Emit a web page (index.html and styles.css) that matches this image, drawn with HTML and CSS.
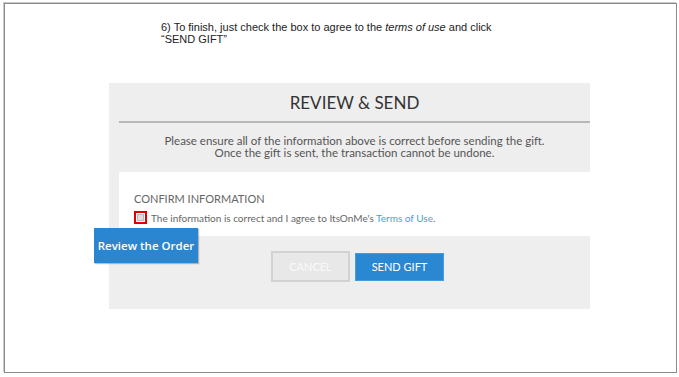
FILE: index.html
```html
<!DOCTYPE html>
<html lang="en">
<head>
    <meta charset="UTF-8">
    <meta name="viewport" content="width=device-width, initial-scale=1.0">
    <title>Send Gift - Step 6</title>
    <link rel="stylesheet" href="styles.css">
</head>
<body>
    <div class="slide">
        <p class="step-text">6) To finish, just check the box to agree to the <em>terms of use</em> and click<br>&ldquo;SEND GIFT&rdquo;</p>

        <div class="review-panel">
            <div class="review-head">
                <h2>REVIEW &amp; SEND</h2>
                <p class="note">Please ensure all of the information above is correct before sending the gift.<br>Once the gift is sent, the transaction cannot be undone.</p>
            </div>
            <div class="confirm-box">
                <h3>CONFIRM INFORMATION</h3>
                <label class="agree">
                    <span class="check"><span class="check-inner"></span></span>
                    <span>The information is correct and I agree to ItsOnMe's <a href="#">Terms of Use</a>.</span>
                </label>
            </div>
            <div class="actions">
                <button class="btn-cancel">CANCEL</button>
                <button class="btn-send">SEND GIFT</button>
            </div>
        </div>

        <div class="callout">Review the Order</div>
    </div>
</body>
</html>
```

FILE: styles.css
```css
body {
    margin: 0;
    padding: 0;
    background-color: #fff;
}

.slide {
    position: relative;
    box-sizing: border-box;
    width: 673px;
    height: 370px;
    margin: 3px 0 0 4px;
    border: 1px solid #8c8c8c;
    box-shadow: -1px -1px 0 #c8c8c8;
    padding-top: 17px;
}

.step-text {
    margin: 0 0 0 156px;
    font-family: "Liberation Sans", Arial, sans-serif;
    font-size: 11px;
    line-height: 12px;
    color: #222;
}

.step-text em {
    font-style: italic;
}

.review-panel {
    width: 481px;
    margin: 38px 0 0 104px;
    background-color: #eeeeee;
    font-family: Lato, "Open Sans", sans-serif;
}

.review-head {
    padding: 10px 0 0 10px;
}

.review-head h2 {
    margin: 0;
    padding-bottom: 8px;
    border-bottom: 2px solid #b8b8b8;
    text-align: center;
    font-size: 17px;
    font-weight: 400;
    line-height: 20px;
    color: #333;
}

.note {
    margin: 0;
    padding: 12px 0 13px;
    text-align: center;
    font-size: 11.5px;
    line-height: 12px;
    color: #555;
}

.confirm-box {
    margin-left: 10px;
    padding: 20px 15px 12px;
    background-color: #fff;
}

.confirm-box h3 {
    margin: 0 0 6px;
    font-size: 11px;
    font-weight: 400;
    color: #666;
}

.agree {
    display: flex;
    align-items: center;
    gap: 4px;
    font-size: 10px;
    color: #666;
}

.agree a {
    color: #3aa6dc;
    text-decoration: none;
}

.check {
    display: inline-block;
    box-sizing: border-box;
    width: 13px;
    height: 13px;
    border: 2px solid #e00000;
    padding: 1px;
    background-color: #fff;
}

.check-inner {
    display: block;
    width: 100%;
    height: 100%;
    background-color: #ddd;
    box-shadow: inset 0 0 0 1px #bbb;
}

.actions {
    display: flex;
    justify-content: center;
    align-items: center;
    gap: 5px;
    padding: 15px 0 27px 16px;
}

.actions button {
    font-family: Lato, "Open Sans", sans-serif;
    font-size: 11px;
    cursor: pointer;
}

.btn-cancel {
    width: 79px;
    height: 31px;
    background-color: #e8e8e8;
    border: 2px solid #d2d2d2;
    color: #fafafa;
}

.btn-send {
    width: 89px;
    height: 28px;
    background-color: #2a87d1;
    border: 1px solid #4a9ad8;
    color: #fff;
}

.callout {
    position: absolute;
    left: 89px;
    top: 224px;
    width: 104px;
    height: 35px;
    line-height: 35px;
    text-align: center;
    background-color: #2a86d0;
    color: #fff;
    font-family: "Open Sans", sans-serif;
    font-size: 11.5px;
    font-weight: 600;
    box-shadow: 1px 1px 1px rgba(0, 0, 0, 0.25);
}
```
